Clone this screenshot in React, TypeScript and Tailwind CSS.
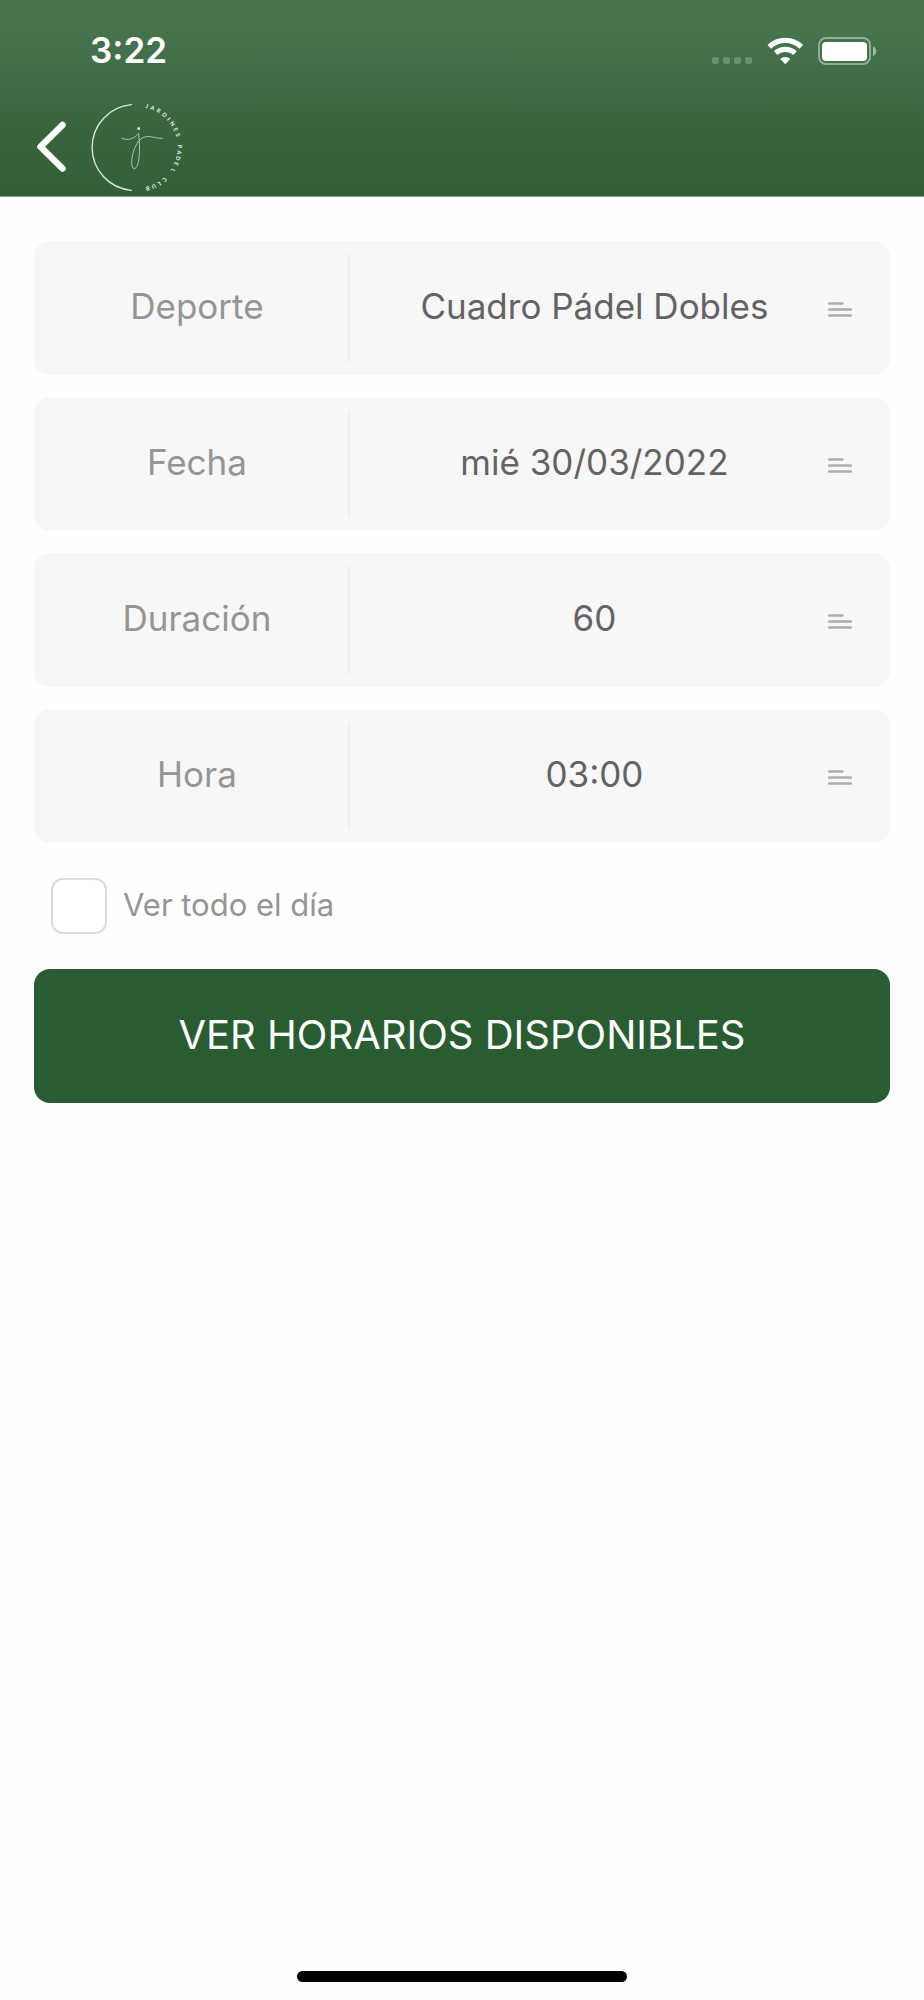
import { useState } from "react";

const fields = [
  { id: "deporte", label: "Deporte", value: "Cuadro Pádel Dobles" },
  { id: "fecha", label: "Fecha", value: "mié 30/03/2022" },
  { id: "duracion", label: "Duración", value: "60" },
  { id: "hora", label: "Hora", value: "03:00" },
];

// letters around the right side of the logo, angle in degrees from the top
const ring: [string, number][] = [
  ["J", 13], ["A", 21], ["R", 30], ["D", 40], ["I", 48], ["N", 56], ["E", 65], ["S", 73],
  ["P", 89], ["A", 97], ["D", 105], ["E", 113], ["L", 123],
  ["C", 140], ["L", 149], ["U", 157], ["B", 166],
];

function Logo() {
  return (
    <svg width="95" height="90" viewBox="30 24 285 270" fill="none" stroke="#dfe8df" strokeLinecap="round" aria-label="Jardines Padel Club">
      <path d="M154 29A129 129 0 0 0 154 286" strokeWidth="4" />
      <g stroke="#c3d2c4" strokeWidth="2.5">
        <path d="M126 130C143 137 159 134 176 115C178 140 180 166 177 190C174 214 167 222 162 221C152 218 154 190 161 168C168 147 179 130 194 126C213 121 226 131 247 130" />
      </g>
      <circle cx="176" cy="101" r="4" fill="#ffffff" stroke="none" />
      <g fill="#eef4ee" stroke="none" fontSize="17" fontWeight="700" fontFamily="Lato, sans-serif" textAnchor="middle">
        {ring.map(([letter, angle]) => (
          <text key={angle} x="172" y="36" transform={`rotate(${angle} 172 157)`}>
            {letter}
          </text>
        ))}
      </g>
    </svg>
  );
}

function StatusBar() {
  return (
    <div className="flex h-[101px] items-center justify-between pl-[90px] pr-[47px]">
      <span className="text-[35px] leading-none font-semibold">3:22</span>
      <svg width="166" height="28" viewBox="711 36 166 28" fill="#ffffff">
        <g opacity="0.22">
          <rect x="712" y="56" width="7" height="7" rx="2" />
          <rect x="723" y="56" width="7" height="7" rx="2" />
          <rect x="734" y="56" width="7" height="7" rx="2" />
          <rect x="745" y="56" width="7" height="7" rx="2" />
        </g>
        <g fill="none" stroke="#ffffff" strokeWidth="5.2">
          <path d="M769.3 45.8A23.2 23.2 0 0 1 801.3 45.8" />
          <path d="M775.6 52.2A14.2 14.2 0 0 1 795 52.2" />
        </g>
        <path d="M785.3 63.2L780.2 58A7.4 7.4 0 0 1 790.4 58Z" />
        <rect x="819" y="37" width="51" height="26" rx="7" fill="none" stroke="#ffffff" strokeOpacity="0.42" strokeWidth="2" />
        <rect x="822" y="41" width="45" height="19" rx="4" />
        <path d="M873 45.5C877.4 47 877.4 53.5 873 55Z" opacity="0.5" />
      </svg>
    </div>
  );
}

function Field({ id, label, value }: { id: string; label: string; value: string }) {
  return (
    <div className="grid h-[134px] grid-cols-[11fr_19fr] rounded-2xl bg-[#f7f7f7] text-[35px]">
      <label htmlFor={id} className="flex items-center justify-center pb-1 pl-3 text-[#959595]">
        {label}
      </label>
      <div className="relative my-[13px] border-l-2 border-[#ededed]">
        <select
          id={id}
          className="h-full w-full appearance-none bg-transparent pr-[51px] pb-1 text-center text-[#636363] [text-align-last:center]"
        >
          <option>{value}</option>
        </select>
        <svg className="pointer-events-none absolute top-[48px] right-[38px]" width="24" height="15" viewBox="0 0 24 15" stroke="#adadad" strokeWidth="2.4" strokeLinecap="round">
          <path d="M1.2 1.5H14.5M1.2 7.5H22.8M1.2 13.5H22.8" />
        </svg>
      </div>
    </div>
  );
}

export default function App() {
  const [allDay, setAllDay] = useState(false);

  return (
    <div className="flex min-h-screen flex-col bg-[#fefefe] font-[Inter,sans-serif]">
      <header className="border-b border-[#7e9f84] bg-linear-to-b from-[#46744d] from-15% via-[#37633d] via-70% to-[#345f39] text-white">
        <StatusBar />
        <div className="flex items-center gap-6 pt-[2px] pb-[3px] pl-[37px]">
          <button type="button" aria-label="Volver" className="pb-1">
            <svg width="29" height="51" viewBox="37 121 29 51" fill="none" stroke="#ffffff" strokeWidth="6.5" strokeLinecap="round" strokeLinejoin="round">
              <path d="M62.5 125L40.5 146.7L62.5 168.5" />
            </svg>
          </button>
          <Logo />
        </div>
      </header>

      <main className="flex flex-col gap-[35px] px-[34px] pt-11">
        <div className="flex flex-col gap-[22px]">
          {fields.map((field) => (
            <Field key={field.id} {...field} />
          ))}
        </div>

        <label className="flex items-center gap-4 pl-[17px] text-[31px] text-[#959595]">
          <input
            type="checkbox"
            checked={allDay}
            onChange={(e) => setAllDay(e.target.checked)}
            className="h-14 w-14 appearance-none rounded-xl border-2 border-[#dcdcdc] bg-white checked:bg-[#295c30]"
          />
          <span className="pb-[2px]">Ver todo el día</span>
        </label>

        <button type="button" className="h-[134px] rounded-2xl bg-[#295c30] pb-[2px] text-[40px] text-white">
          VER HORARIOS DISPONIBLES
        </button>
      </main>

      <div className="mt-auto flex justify-center pb-[18px]">
        <div className="h-[11px] w-[330px] rounded-full bg-black" />
      </div>
    </div>
  );
}
